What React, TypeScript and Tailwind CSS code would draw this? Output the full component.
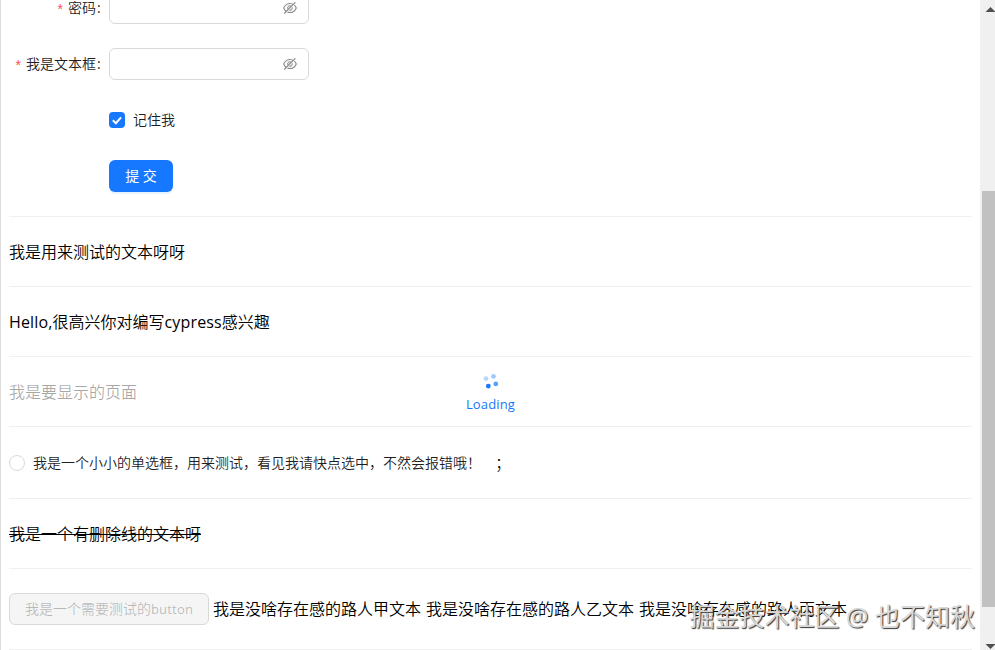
import type { ReactNode } from "react";
import clsx from "clsx";
import { AiOutlineEyeInvisible } from "react-icons/ai";

interface FormRowProps {
  label?: string;
  children: ReactNode;
}

function FormRow({ label, children }: FormRowProps) {
  return (
    <div className="mb-6 flex h-8 items-center">
      <div className="flex w-[100px] shrink-0 items-center justify-end pr-2 text-sm text-black/90">
        {label && (
          <>
            <span className="mr-[5px] pt-0.5 font-[SimSun,'Liberation_Sans',sans-serif] text-[#ff4d4f]">*</span>
            <span>{label}</span>
            <span className="ml-px w-1 font-normal">:</span>
          </>
        )}
      </div>
      {children}
    </div>
  );
}

function PasswordInput() {
  return (
    <div className="flex h-8 w-[200px] items-center rounded-md border border-[#d9d9d9] bg-white pr-2.5 pl-[11px]">
      <input type="password" className="min-w-0 flex-1 outline-none" />
      <AiOutlineEyeInvisible className="h-4 w-4 text-black/45" />
    </div>
  );
}

interface SectionProps {
  className?: string;
  children?: ReactNode;
}

function Section({ className, children }: SectionProps) {
  return (
    <div className={clsx("flex shrink-0 items-center border-t border-[#f0f0f0] whitespace-pre", className ?? "h-[70px]")}>
      {children}
    </div>
  );
}

function Spinner() {
  return (
    <div className="absolute inset-0 flex flex-col items-center pt-[15px] text-[13px] text-[#1677ff]">
      <svg width="20" height="20" viewBox="0 0 20 20" fill="#1677ff">
        <circle cx="5" cy="6.6" r="2.4" opacity="0.3" />
        <circle cx="12.5" cy="4.4" r="2.4" opacity="0.4" />
        <circle cx="14.8" cy="11.9" r="2.4" opacity="0.7" />
        <circle cx="7.3" cy="14.1" r="2.4" />
      </svg>
      <span className="mt-px leading-[22px] font-normal tracking-[0.15px]">Loading</span>
    </div>
  );
}

function Scrollbar() {
  return (
    <div className="flex w-[15px] shrink-0 flex-col items-end bg-[#f0f0f0]">
      <svg className="h-[191px] w-[13px]" viewBox="0 0 13 191" fill="#505050">
        <path d="M8.5 7 L13.5 12 H3.5 Z" />
      </svg>
      <div className="h-[416px] w-[13px] bg-[#c1c1c1]" />
      <svg className="h-[43px] w-[13px]" viewBox="0 0 13 43" fill="#505050">
        <path d="M3.5 37 H13.5 L8.5 42 Z" />
      </svg>
    </div>
  );
}

export default function App() {
  return (
    <div className="relative flex h-[650px] w-[995px] overflow-hidden border-l border-[#dcdcdc] bg-white font-['Open_Sans','Noto_Sans_CJK_SC',sans-serif] text-base font-[350] text-black">
      <div className="flex min-w-0 flex-1 flex-col px-2">
        <div className="-mt-2 shrink-0">
          <FormRow label="密码">
            <PasswordInput />
          </FormRow>
          <FormRow label="我是文本框">
            <PasswordInput />
          </FormRow>
          <FormRow>
            <label className="flex items-center text-sm text-black/90">
              <span className="flex h-4 w-4 items-center justify-center rounded bg-[#1677ff]">
                <svg width="12" height="12" viewBox="0 0 12 12" fill="none" stroke="#fff" strokeWidth="2">
                  <path d="M1.8 6.2 L4.9 9.2 L10 3.3" />
                </svg>
              </span>
              <span className="px-2">记住我</span>
            </label>
          </FormRow>
          <FormRow>
            <button className="h-8 w-16 rounded-md bg-[#1677ff] text-sm font-normal text-white shadow-[0_2px_0_rgba(5,145,255,0.1)]">
              提 交
            </button>
          </FormRow>
        </div>

        <Section>我是用来测试的文本呀呀</Section>
        <Section>
          <span className="font-normal tracking-[0.15px]">Hello,</span>
          很高兴你对编写
          <span className="font-normal tracking-[0.15px]">cypress</span>
          感兴趣
        </Section>
        <Section className="relative h-[70px]">
          <span className="text-black/35">我是要显示的页面</span>
          <Spinner />
        </Section>
        <Section className="h-[72px]">
          <span className="mr-2 h-4 w-4 rounded-full border border-[#d9d9d9]" />
          <span className="text-sm text-black/90">我是一个小小的单选框，用来测试，看见我请快点选中，不然会报错哦！</span>
          <span className="ml-3.5 font-light">；</span>
        </Section>
        <Section>
          <del>我是一个有删除线的文本呀</del>
        </Section>
        <Section className="h-[81px]">
          <button
            disabled
            className="mr-1 h-8 w-[200px] rounded-md border border-[#d9d9d9] bg-black/4 text-sm text-black/25"
          >
            我是一个需要测试的<span className="text-[13px] font-normal tracking-[0.2px]">button</span>
          </button>
          <span className="[word-spacing:0.8px]">
            我是没啥存在感的路人甲文本 我是没啥存在感的路人乙文本 我是没啥存在感的路人丙文本
          </span>
        </Section>
        <Section className="h-2" />
      </div>
      <Scrollbar />
      <div className="absolute right-5 bottom-4 text-[25px] leading-9 font-normal whitespace-pre text-[#d8d8d8] [text-shadow:1px_1px_1px_#333]">
        掘金技术社区 @ 也不知秋
      </div>
    </div>
  );
}
